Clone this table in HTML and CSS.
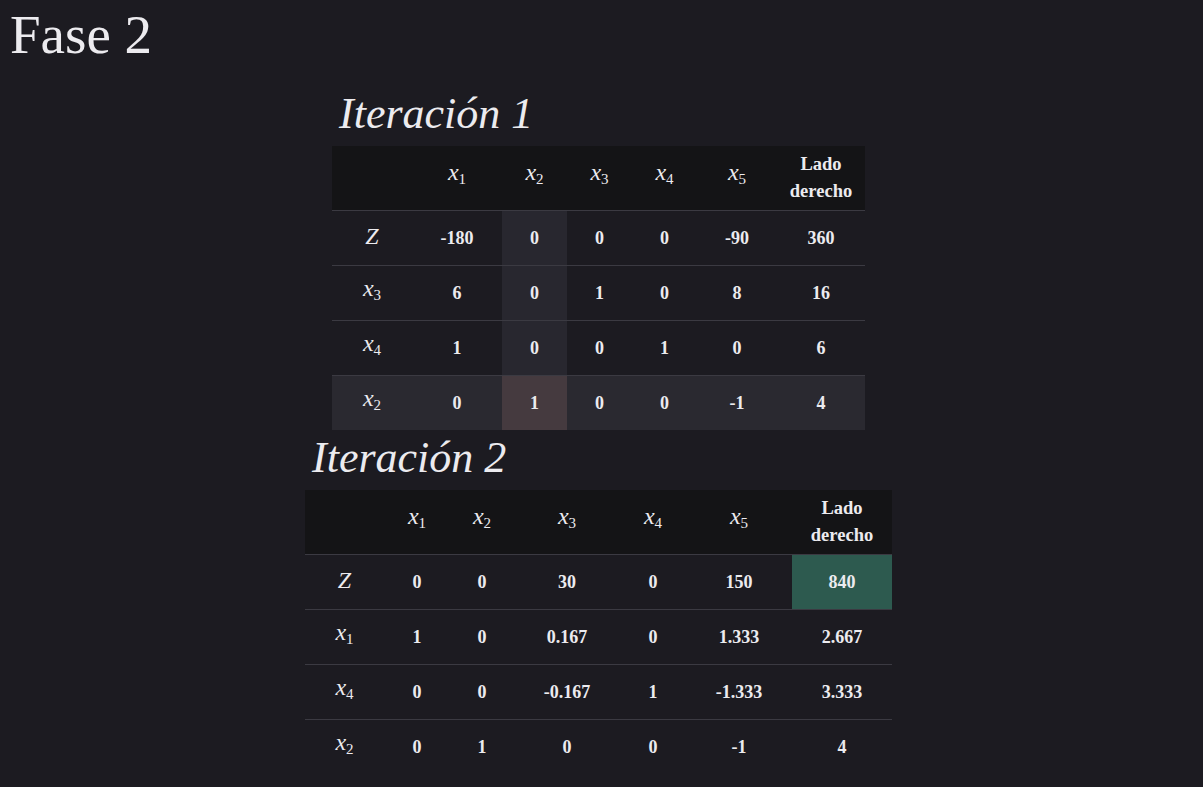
FILE: index.html
```html
<!DOCTYPE html>
<html lang="es">
<head>
<meta charset="utf-8">
<title>Fase 2</title>
<link rel="stylesheet" href="styles.css">
</head>
<body>
<h1 class="phase">Fase 2</h1>
<main class="iterations">
  <section class="iter">
    <h2 class="iter-title">Iteración 1</h2>
    <table class="tableau t1">
      <colgroup>
        <col class="c80"><col class="c90"><col class="c65"><col class="c65"><col class="c65"><col class="c80"><col class="c88">
      </colgroup>
      <thead>
        <tr>
          <th></th>
          <th><span class="v">x</span><sub>1</sub></th>
          <th><span class="v">x</span><sub>2</sub></th>
          <th><span class="v">x</span><sub>3</sub></th>
          <th><span class="v">x</span><sub>4</sub></th>
          <th><span class="v">x</span><sub>5</sub></th>
          <th class="rhs">Lado<br>derecho</th>
        </tr>
      </thead>
      <tbody>
        <tr>
          <td><span class="v z">Z</span></td>
          <td>-180</td><td class="col-hl">0</td><td>0</td><td>0</td><td>-90</td><td>360</td>
        </tr>
        <tr>
          <td><span class="v">x</span><sub>3</sub></td>
          <td>6</td><td class="col-hl">0</td><td>1</td><td>0</td><td>8</td><td>16</td>
        </tr>
        <tr>
          <td><span class="v">x</span><sub>4</sub></td>
          <td>1</td><td class="col-hl">0</td><td>0</td><td>1</td><td>0</td><td>6</td>
        </tr>
        <tr class="row-hl">
          <td><span class="v">x</span><sub>2</sub></td>
          <td>0</td><td class="pivot">1</td><td>0</td><td>0</td><td>-1</td><td>4</td>
        </tr>
      </tbody>
    </table>
  </section>

  <section class="iter">
    <h2 class="iter-title">Iteración 2</h2>
    <table class="tableau t2">
      <colgroup>
        <col class="c79"><col class="c66"><col class="c64"><col class="c106"><col class="c66"><col class="c106"><col class="c100">
      </colgroup>
      <thead>
        <tr>
          <th></th>
          <th><span class="v">x</span><sub>1</sub></th>
          <th><span class="v">x</span><sub>2</sub></th>
          <th><span class="v">x</span><sub>3</sub></th>
          <th><span class="v">x</span><sub>4</sub></th>
          <th><span class="v">x</span><sub>5</sub></th>
          <th class="rhs">Lado<br>derecho</th>
        </tr>
      </thead>
      <tbody>
        <tr>
          <td><span class="v z">Z</span></td>
          <td>0</td><td>0</td><td>30</td><td>0</td><td>150</td><td class="optimal">840</td>
        </tr>
        <tr>
          <td><span class="v">x</span><sub>1</sub></td>
          <td>1</td><td>0</td><td>0.167</td><td>0</td><td>1.333</td><td>2.667</td>
        </tr>
        <tr>
          <td><span class="v">x</span><sub>4</sub></td>
          <td>0</td><td>0</td><td>-0.167</td><td>1</td><td>-1.333</td><td>3.333</td>
        </tr>
        <tr>
          <td><span class="v">x</span><sub>2</sub></td>
          <td>0</td><td>1</td><td>0</td><td>0</td><td>-1</td><td>4</td>
        </tr>
      </tbody>
    </table>
  </section>
</main>
</body>
</html>
```

FILE: styles.css
```css
html, body {
  margin: 0;
  padding: 0;
}

body {
  background: #1c1b21;
  color: #ecebef;
  font-family: "Liberation Serif", "Times New Roman", serif;
  min-height: 787px;
}

.phase {
  margin: 0;
  padding: 8px 0 0 10px;
  font-size: 55px;
  line-height: 54px;
  font-weight: normal;
}

.iterations {
  display: flex;
  flex-direction: column;
  align-items: center;
  padding-right: 6px;
  padding-top: 30px;
  gap: 6px;
}

.iter {
  display: flex;
  flex-direction: column;
}

.iter-title {
  margin: 0 0 10px 7px;
  font-size: 44px;
  line-height: 44px;
  font-style: italic;
  font-weight: normal;
}

.tableau {
  border-collapse: separate;
  border-spacing: 0;
  table-layout: fixed;
}

.t1 { width: 533px; }
.t2 { width: 587px; }

.c64 { width: 64px; }
.c65 { width: 65px; }
.c66 { width: 66px; }
.c79 { width: 79px; }
.c80 { width: 80px; }
.c88 { width: 88px; }
.c90 { width: 90px; }
.c100 { width: 100px; }
.c106 { width: 106px; }

.tableau th {
  background: #141416;
  height: 54px;
  padding: 5px 0;
  text-align: center;
  vertical-align: middle;
  font-weight: normal;
}

.tableau th.rhs {
  font-size: 18.5px;
  line-height: 27px;
  font-weight: bold;
}

.tableau td {
  border-top: 1px solid #3b3a42;
  padding: 0;
  height: 54px;
  text-align: center;
  vertical-align: middle;
  font-size: 18px;
  line-height: 22px;
  font-weight: bold;
}

.v {
  font-style: italic;
  font-weight: normal;
  font-size: 24px;
  vertical-align: 3px;
  line-height: 0;
}

.v.z {
  font-size: 24px;
  vertical-align: 0;
}

sub {
  font-size: 15px;
  font-weight: normal;
  vertical-align: -1px;
  line-height: 0;
}

.col-hl {
  background: #28272f;
}

.row-hl td {
  background: #2a2930;
}

.row-hl td.pivot {
  background: #453a3f;
}

.optimal {
  background: #2d5a4f;
}
```
